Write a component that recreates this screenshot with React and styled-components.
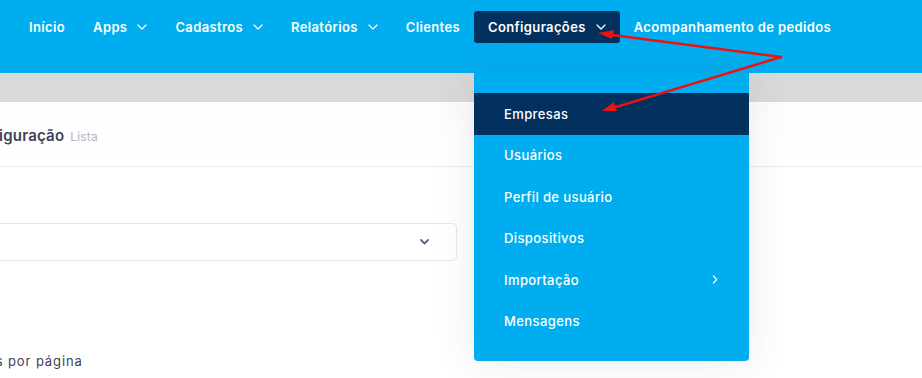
import React from "react";
import styled, { createGlobalStyle } from "styled-components";

const Global = createGlobalStyle`
  html, body { margin: 0; padding: 0; background: #ffffff; }
  body { font-family: "Inter", "Noto Sans", sans-serif; overflow: hidden; }
  * { box-sizing: border-box; }
`;

const Page = styled.div`
  position: relative;
  width: 922px;
  height: 378px;
  overflow: hidden;
  background: #ffffff;
`;

const Header = styled.header`
  height: 73px;
  background: #00aeef;
  padding: 11px 0 0 15px;
`;

const Nav = styled.nav`
  display: flex;
  align-items: flex-start;
`;

const NavItem = styled.div`
  position: relative;
  display: flex;
  align-items: center;
  height: 32px;
  padding: 0 14px;
  border-radius: 3px;
  color: #ffffff;
  font-size: 13px;
  font-weight: 600;
  letter-spacing: 0.37px;
  white-space: nowrap;
  background: ${(p) => (p.$active ? "#02305f" : "transparent")};
`;

const Caret = styled.svg`
  margin-left: 10px;
  width: 10px;
  height: 6px;
`;

const Dropdown = styled.div`
  position: absolute;
  top: 62px;
  left: 0;
  width: 275px;
  padding: 20px 0 19px;
  background: #00aeef;
  border-radius: 0 0 4px 4px;
  box-shadow: 0 0 40px 0 rgba(82, 63, 105, 0.12);
  z-index: 5;
`;

const MenuItem = styled.div`
  display: flex;
  align-items: center;
  justify-content: space-between;
  height: 41.5px;
  padding: 0 31px 0 30px;
  color: #ffffff;
  font-size: 13px;
  font-weight: 500;
  letter-spacing: 0.4px;
  background: ${(p) => (p.$active ? "#02305f" : "transparent")};
`;

const SubHeader = styled.div`
  height: 29px;
  background: #d9d9d9;
`;

const Card = styled.section`
  margin-left: -37px;
  background: linear-gradient(#fdfdfd, #ffffff 60px);
`;

const CardHead = styled.div`
  display: flex;
  align-items: baseline;
  height: 65px;
  padding-top: 24px;
  border-bottom: 1px solid #eceef3;
`;

const Title = styled.h3`
  margin: 0;
  font-size: 15px;
  font-weight: 600;
  color: #3f4254;
  letter-spacing: 0.2px;
`;

const Sub = styled.span`
  margin-left: 6px;
  font-size: 12px;
  color: #b5b5c3;
  letter-spacing: 0.2px;
`;

const CardBody = styled.div`
  padding-top: 56px;
`;

const Select = styled.div`
  display: flex;
  align-items: center;
  justify-content: flex-end;
  width: 494px;
  height: 38px;
  padding-right: 27px;
  border: 1px solid #e4e6ef;
  border-radius: 5px;
  background: #ffffff;
`;

const PerPage = styled.div`
  margin-top: 92px;
  margin-left: -25px;
  font-size: 13px;
  color: #3f4254;
  letter-spacing: 0.9px;
`;

const Arrows = styled.svg`
  position: absolute;
  left: 0;
  top: 0;
  width: 922px;
  height: 378px;
  pointer-events: none;
  z-index: 10;
`;

const Down = () => (
  <Caret viewBox="0 0 10 6">
    <path d="M1 1l4 4 4-4" fill="none" stroke="#fff" strokeWidth="1.2" strokeLinecap="round" strokeLinejoin="round" />
  </Caret>
);

const menu = ["Empresas", "Usuários", "Perfil de usuário", "Dispositivos", "Importação", "Mensagens"];

export default function App() {
  return (
    <Page>
      <Global />
      <Header>
        <Nav>
          <NavItem>Início</NavItem>
          <NavItem>Apps<Down /></NavItem>
          <NavItem>Cadastros<Down /></NavItem>
          <NavItem>Relatórios<Down /></NavItem>
          <NavItem>Clientes</NavItem>
          <NavItem $active>
            Configurações<Down />
            <Dropdown>
              {menu.map((m, i) => (
                <MenuItem key={m} $active={i === 0}>
                  {m}
                  {m === "Importação" && (
                    <svg width="6" height="9" viewBox="0 0 6 9">
                      <path d="M1.5 1l3.2 3.5L1.5 8" fill="none" stroke="#fff" strokeWidth="1.2" strokeLinecap="round" />
                    </svg>
                  )}
                </MenuItem>
              ))}
            </Dropdown>
          </NavItem>
          <NavItem>Acompanhamento de pedidos</NavItem>
        </Nav>
      </Header>
      <SubHeader />
      <Card>
        <CardHead>
          <Title>Configuração</Title>
          <Sub>Lista</Sub>
        </CardHead>
        <CardBody>
          <Select>
            <svg width="9" height="6" viewBox="0 0 9 6">
              <path d="M1 1l3.5 3.5L8 1" fill="none" stroke="#5e6278" strokeWidth="1.8" strokeLinecap="round" strokeLinejoin="round" />
            </svg>
          </Select>
          <PerPage>Registros por página</PerPage>
        </CardBody>
      </Card>
      <Arrows viewBox="0 0 922 378">
        <g stroke="#ee1111" strokeWidth="2.4" fill="none" strokeLinecap="round">
          <line x1="781" y1="57" x2="612" y2="35" />
          <line x1="781" y1="57" x2="616" y2="107" />
        </g>
        <g fill="#ee1111">
          <polygon points="598,33 614,30 612,39" />
          <polygon points="602,111 614,102 617,111" />
        </g>
      </Arrows>
    </Page>
  );
}
